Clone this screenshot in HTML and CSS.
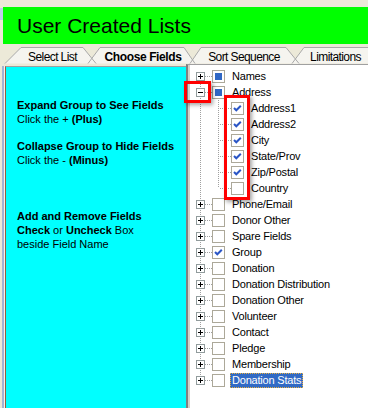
FILE: index.html
```html
<!DOCTYPE html>
<html>
<head>
<meta charset="utf-8">
<link rel="stylesheet" href="styles.css">
</head>
<body>
<div class="top">
  <div class="edge"><div class="edge-mark"></div></div>
  <div class="title">User Created Lists</div>
</div>
<div class="tabs">
  <svg class="tab-shapes" width="368" height="20" viewBox="0 0 368 20">
    <g fill="#F5F4EF">
      <path d="M5 19.5 L21 3.5 H83 L96 19.5Z"/>
      <path d="M190 19.5 L201 3.5 H286 L299 19.5Z"/>
      <path d="M292 19.5 L304 3.5 H370 V19.5Z"/>
      <path d="M88 19.5 L100 3.5 H184 L195 19.5Z"/>
    </g>
    <g fill="none" stroke="#A9A9A9">
      <path d="M5 19.5 L21 3.5 H83 L96 19.5"/>
      <path d="M190 19.5 L201 3.5 H286 L299 19.5"/>
      <path d="M292 19.5 L304 3.5 H370"/>
      <path d="M88 19.5 L100 3.5 H184 L195 19.5"/>
    </g>
  </svg>
  <div class="tab-labels">
    <span class="tab t1">Select List</span>
    <span class="tab t2">Choose Fields</span>
    <span class="tab t3">Sort Sequence</span>
    <span class="tab t4">Limitations</span>
  </div>
</div>
<div class="content">
  <div class="side">
    <div class="help">
      <p><b>Expand Group to See Fields</b><br>Click the + <b>(Plus)</b></p>
      <p class="g2"><b>Collapse Group to Hide Fields</b><br>Click the - <b>(Minus)</b></p>
      <p class="g3"><b>Add and Remove Fields</b><br><b>Check</b> or <b>Uncheck</b> Box<br>beside Field Name</p>
    </div>
  </div>
  <div class="tree">
    <div class="row first"><span class="exp"><span class="pm plus"></span></span><span class="cb part"></span><span class="lbl">Names</span></div>
    <div class="row"><span class="exp"><span class="pm minus"></span></span><span class="cb part"></span><span class="lbl">Address</span></div>
    <div class="row child"><span class="exp"></span><span class="conn"></span><span class="cb"><svg class="tick" width="11" height="11" viewBox="0 0 11 11"><path d="M2 5 L4.3 7.3 L8.8 2.8" fill="none" stroke="#2B56C6" stroke-width="2"/></svg></span><span class="lbl">Address1</span></div>
    <div class="row child"><span class="exp"></span><span class="conn"></span><span class="cb"><svg class="tick" width="11" height="11" viewBox="0 0 11 11"><path d="M2 5 L4.3 7.3 L8.8 2.8" fill="none" stroke="#2B56C6" stroke-width="2"/></svg></span><span class="lbl">Address2</span></div>
    <div class="row child"><span class="exp"></span><span class="conn"></span><span class="cb"><svg class="tick" width="11" height="11" viewBox="0 0 11 11"><path d="M2 5 L4.3 7.3 L8.8 2.8" fill="none" stroke="#2B56C6" stroke-width="2"/></svg></span><span class="lbl">City</span></div>
    <div class="row child"><span class="exp"></span><span class="conn"></span><span class="cb"><svg class="tick" width="11" height="11" viewBox="0 0 11 11"><path d="M2 5 L4.3 7.3 L8.8 2.8" fill="none" stroke="#2B56C6" stroke-width="2"/></svg></span><span class="lbl">State/Prov</span></div>
    <div class="row child"><span class="exp"></span><span class="conn"></span><span class="cb"><svg class="tick" width="11" height="11" viewBox="0 0 11 11"><path d="M2 5 L4.3 7.3 L8.8 2.8" fill="none" stroke="#2B56C6" stroke-width="2"/></svg></span><span class="lbl">Zip/Postal</span></div>
    <div class="row child lastchild"><span class="exp"></span><span class="conn"></span><span class="cb"></span><span class="lbl">Country</span></div>
    <div class="row"><span class="exp"><span class="pm plus"></span></span><span class="cb"></span><span class="lbl">Phone/Email</span></div>
    <div class="row"><span class="exp"><span class="pm plus"></span></span><span class="cb"></span><span class="lbl">Donor Other</span></div>
    <div class="row"><span class="exp"><span class="pm plus"></span></span><span class="cb"></span><span class="lbl">Spare Fields</span></div>
    <div class="row"><span class="exp"><span class="pm plus"></span></span><span class="cb"><svg class="tick" width="11" height="11" viewBox="0 0 11 11"><path d="M2 5 L4.3 7.3 L8.8 2.8" fill="none" stroke="#2B56C6" stroke-width="2"/></svg></span><span class="lbl">Group</span></div>
    <div class="row"><span class="exp"><span class="pm plus"></span></span><span class="cb"></span><span class="lbl">Donation</span></div>
    <div class="row"><span class="exp"><span class="pm plus"></span></span><span class="cb"></span><span class="lbl">Donation Distribution</span></div>
    <div class="row"><span class="exp"><span class="pm plus"></span></span><span class="cb"></span><span class="lbl">Donation Other</span></div>
    <div class="row"><span class="exp"><span class="pm plus"></span></span><span class="cb"></span><span class="lbl">Volunteer</span></div>
    <div class="row"><span class="exp"><span class="pm plus"></span></span><span class="cb"></span><span class="lbl">Contact</span></div>
    <div class="row"><span class="exp"><span class="pm plus"></span></span><span class="cb"></span><span class="lbl">Pledge</span></div>
    <div class="row"><span class="exp"><span class="pm plus"></span></span><span class="cb"></span><span class="lbl">Membership</span></div>
    <div class="row last"><span class="exp"><span class="pm plus"></span></span><span class="cb"></span><span class="lbl sel">Donation Stats</span></div>
  </div>
  <div class="mark mark-exp"></div>
  <div class="mark mark-checks"></div>
</div>
</body>
</html>
```

FILE: styles.css
```css
html, body {
  margin: 0;
  padding: 0;
}
body {
  background: #ECE9D8;
  width: 368px;
  height: 408px;
  overflow: hidden;
  font-family: "Liberation Sans", Arial, sans-serif;
  color: #000;
}

/* header */
.top {
  display: flex;
  margin-top: 7px;
  height: 37px;
}
.edge {
  width: 3px;
  flex: none;
}
.edge-mark {
  height: 12px;
  margin-top: 1px;
  background: #BFCDEB;
}
.title {
  flex: 1;
  background: #00FF00;
  font-size: 21px;
  line-height: 37px;
  padding-left: 14px;
  white-space: nowrap;
}

/* tabs */
.tabs {
  display: grid;
  height: 20px;
}
.tabs > * {
  grid-area: 1 / 1;
}
.tab-shapes {
  display: block;
}
.tab-labels {
  display: flex;
  padding-top: 6px;
  font-size: 12px;
  line-height: 14px;
  letter-spacing: -0.6px;
}
.tab {
  display: flex;
  justify-content: center;
  white-space: nowrap;
}
.t1 { width: 105px; }
.t2 { width: 76px; font-weight: bold; letter-spacing: -0.4px; }
.t3 { width: 126px; }
.t4 { width: 57px; }

/* content */
.content {
  position: relative;
  display: flex;
  height: 344px;
}
.side {
  width: 186px;
  flex: none;
  box-sizing: border-box;
  padding: 2px 0 0 5px;
}
.help {
  height: 100%;
  box-sizing: border-box;
  background: #00FFFF;
  border-top: 1px solid #9F9F9F;
  border-left: 1px solid #9A5B3C;
  box-shadow: -1px 0 0 #F2F2F2, -3px 0 0 #A3B3D3;
  padding: 31px 0 0 11px;
  font-size: 11px;
  line-height: 14px;
}
.help p {
  margin: 0;
}
.help .g2 { margin-top: 13px; }
.help .g3 { margin-top: 42px; }

/* tree */
.tree {
  flex: 1;
  background: #fff;
  border-left: 2px solid #808080;
  border-top: 1px solid #A0A0A0;
  box-shadow: inset 2px 0 0 #D4D0C8;
  padding: 3px 0 0 2px;
  font-size: 11px;
  letter-spacing: -0.2px;
}
.row {
  display: flex;
  align-items: center;
  height: 16px;
}
.exp {
  width: 22px;
  height: 16px;
  flex: none;
  display: flex;
  align-items: center;
  background-image:
    repeating-linear-gradient(to bottom, #A0A0A0 0 1px, transparent 1px 2px),
    repeating-linear-gradient(to right, #A0A0A0 0 1px, transparent 1px 2px);
  background-repeat: no-repeat;
  background-position: 10px 0, 15px 8px;
  background-size: 1px 16px, 7px 1px;
}
.first .exp {
  background-position: 10px 8px, 15px 8px;
  background-size: 1px 8px, 7px 1px;
}
.last .exp {
  background-size: 1px 8px, 7px 1px;
}
.child .exp {
  background-size: 1px 16px, 0 0;
}
.conn {
  width: 19px;
  height: 16px;
  flex: none;
  background-image:
    repeating-linear-gradient(to bottom, #A0A0A0 0 1px, transparent 1px 2px),
    repeating-linear-gradient(to right, #A0A0A0 0 1px, transparent 1px 2px);
  background-repeat: no-repeat;
  background-position: 6px 0, 8px 8px;
  background-size: 1px 16px, 11px 1px;
}
.lastchild .conn {
  background-size: 1px 8px, 11px 1px;
}
.pm {
  width: 9px;
  height: 9px;
  box-sizing: border-box;
  margin-left: 6px;
  border: 1px solid #919B9C;
  background-color: #fff;
  background-repeat: no-repeat;
  background-position: center;
}
.plus {
  background-image: linear-gradient(#000, #000), linear-gradient(#000, #000);
  background-size: 5px 1px, 1px 5px;
}
.minus {
  background-image: linear-gradient(#000, #000);
  background-size: 5px 1px;
}
.cb {
  width: 13px;
  height: 13px;
  flex: none;
  box-sizing: border-box;
  border: 1px solid #ACA899;
  background: #fff;
  display: flex;
  align-items: center;
  justify-content: center;
}
.cb.part::before {
  content: "";
  width: 7px;
  height: 7px;
  background: #3168C5;
}
.tick {
  display: block;
}
.lbl {
  margin-left: 5px;
  padding: 0 1px;
  border: 1px solid transparent;
  line-height: 13px;
  white-space: nowrap;
}
.lbl.sel {
  background: #316AC5;
  color: #fff;
  border: 1px dotted #E8B040;
}

/* red highlight frames */
.mark {
  position: absolute;
  border: 3px solid #FF0000;
  box-shadow: 2px 2px 4px rgba(0, 0, 0, 0.35);
}
.mark-exp {
  left: 184px;
  top: 17px;
  width: 21px;
  height: 16px;
}
.mark-checks {
  left: 224px;
  top: 31px;
  width: 20px;
  height: 99px;
}
```
